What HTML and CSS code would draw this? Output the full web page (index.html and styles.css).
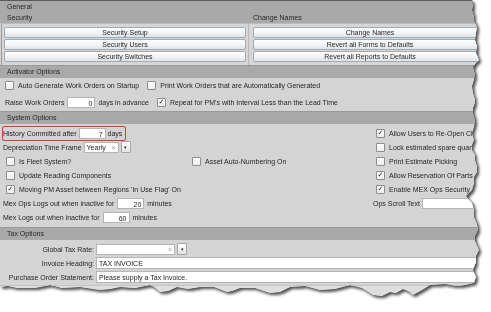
FILE: index.html
```html
<!DOCTYPE html>
<html lang="en">
<head>
    <meta charset="UTF-8">
    <title>Options</title>
    <link rel="stylesheet" href="styles.css">
</head>
<body>
    <div class="paper">
        <div class="sheet">
            <div class="bar">General</div>
            <div class="bar cols">
                <div class="col-head">Security</div>
                <div class="col-head">Change Names</div>
            </div>
            <div class="btn-panel">
                <div class="btn-col left">
                    <div class="btn">Security Setup</div>
                    <div class="btn">Security Users</div>
                    <div class="btn">Security Switches</div>
                </div>
                <div class="btn-col">
                    <div class="btn">Change Names</div>
                    <div class="btn">Revert all Forms to Defaults</div>
                    <div class="btn">Revert all Reports to Defaults</div>
                </div>
            </div>

            <div class="section-head">Activator Options</div>
            <div class="section activator">
                <div class="row">
                    <span class="check"><span class="box"></span>Auto Generate Work Orders on Startup</span>
                    <span class="check gap"><span class="box"></span>Print Work Orders that are Automatically Generated</span>
                </div>
                <div class="row">
                    <span>Raise Work Orders</span>
                    <span class="field num w-days">0</span>
                    <span>days in advance</span>
                    <span class="check gap"><span class="box on">&#10003;</span>Repeat for PM's with Interval Less than the Lead Time</span>
                </div>
            </div>

            <div class="section-head">System Options</div>
            <div class="section system">
                <div class="cell">
                    <span class="highlight">
                        <span>History Committed after</span>
                        <span class="field num w-hist">7</span>
                        <span>days</span>
                    </span>
                </div>
                <div class="cell"></div>
                <div class="cell clip"><span class="check"><span class="box on">&#10003;</span>Allow Users to Re-Open Clos</span></div>

                <div class="cell">
                    <span>Depreciation Time Frame</span>
                    <span class="combo w-year"><span>Yearly</span><span class="clear">&#215;</span></span>
                    <span class="drop">&#9662;</span>
                </div>
                <div class="cell"></div>
                <div class="cell clip"><span class="check"><span class="box"></span>Lock estimated spare quant</span></div>

                <div class="cell"><span class="check"><span class="box"></span>Is Fleet System?</span></div>
                <div class="cell"><span class="check"><span class="box"></span>Asset Auto-Numbering On</span></div>
                <div class="cell clip"><span class="check"><span class="box"></span>Print Estimate Picking</span></div>

                <div class="cell"><span class="check"><span class="box"></span>Update Reading Components</span></div>
                <div class="cell"></div>
                <div class="cell clip"><span class="check"><span class="box on">&#10003;</span>Allow Reservation Of Parts</span></div>

                <div class="cell wide"><span class="check"><span class="box on">&#10003;</span>Moving PM Asset between Regions 'In Use Flag' On</span></div>
                <div class="cell clip"><span class="check"><span class="box on">&#10003;</span>Enable MEX Ops Security</span></div>

                <div class="cell wide">
                    <span>Mex Ops Logs out when inactive for</span>
                    <span class="field num w-min">20</span>
                    <span>minutes</span>
                </div>
                <div class="cell clip">
                    <span>Ops Scroll Text</span>
                    <span class="field w-scroll"></span>
                </div>

                <div class="cell wide">
                    <span>Mex Logs out when inactive for</span>
                    <span class="field num w-min">60</span>
                    <span>minutes</span>
                </div>
            </div>

            <div class="section-head">Tax Options</div>
            <div class="section tax">
                <span class="tax-label">Global Tax Rate:</span>
                <span class="tax-value">
                    <span class="combo w-rate"><span></span><span class="clear">&#215;</span></span>
                    <span class="drop">&#9662;</span>
                </span>
                <span class="tax-label">Invoice Heading:</span>
                <span class="field full">TAX INVOICE</span>
                <span class="tax-label">Purchase Order Statement:</span>
                <span class="field full">Please supply a Tax Invoice.</span>
            </div>
            <div class="tail"></div>
        </div>
    </div>
</body>
</html>
```

FILE: styles.css
```css
body {
    margin: 0;
    padding: 0;
    background-color: #ffffff;
    font-family: "Liberation Sans", Arial, sans-serif;
    font-size: 7px;
    color: #262626;
}

/* torn paper effect round the screenshot */
.paper {
    width: 491px;
    height: 312px;
    overflow: hidden;
    filter: drop-shadow(0 0 0.7px #111111) drop-shadow(2px 2px 1.5px rgba(0, 0, 0, 0.7));
}

.sheet {
    width: 491px;
    background-color: #d4d4d4;
    border-top: 1px solid #5a5a5a;
    box-sizing: border-box;
    overflow: hidden;
    clip-path: polygon(0 0, 472px 0, 473px 6px, 472px 10px, 474px 16px, 474px 21px, 477px 27px, 476px 33px, 475px 40px, 477px 46px, 476px 53px, 479px 60px, 476px 63px, 473px 67px, 475px 74px, 474px 80px, 472px 86px, 473px 93px, 475px 99px, 475px 103px, 473px 108px, 473px 113px, 475px 120px, 474px 127px, 472px 133px, 474px 140px, 472px 145px, 472px 150px, 475px 155px, 475px 160px, 477px 166px, 477px 172px, 474px 177px, 474px 183px, 472px 190px, 466px 196px, 468px 199px, 472px 203px, 474px 210px, 474px 217px, 477px 224px, 478px 230px, 475px 236px, 475px 241px, 479px 250px, 476px 256px, 476px 262px, 473px 270px, 476px 277px, 474px 283px, 465px 285px, 457px 286px, 445px 284px, 430px 285px, 422px 290px, 413px 295px, 408px 291px, 403px 289px, 396px 293px, 390px 292px, 382px 296px, 373px 295px, 362px 288px, 350px 285px, 335px 289px, 320px 290px, 305px 286px, 290px 287px, 280px 292px, 270px 293px, 255px 288px, 240px 288px, 232px 291px, 227px 292px, 214px 287px, 200px 287px, 188px 289px, 177px 287px, 168px 291px, 160px 292px, 154px 287px, 150px 285px, 135px 288px, 120px 287px, 110px 289px, 100px 290px, 80px 287px, 62px 288px, 50px 285px, 35px 288px, 17px 288px, 8px 286px, 0 287px);
}

.bar {
    background-color: #a9a9a9;
    height: 11px;
    line-height: 11px;
    padding-left: 7px;
}

.cols {
    display: flex;
    padding-left: 0;
}

.col-head {
    flex: none;
    width: 246px;
    padding-left: 7px;
    box-sizing: border-box;
}

.btn-panel {
    display: flex;
    background-color: #d6d6d6;
    border-top: 1px solid #bcbcbc;
    border-left: 1px solid #9a9a9a;
    margin-left: 1px;
    height: 42px;
    box-sizing: border-box;
}

.btn-col {
    flex: none;
    display: flex;
    flex-direction: column;
    gap: 1px;
    padding: 3px 2px 0 4px;
    width: 240px;
    box-sizing: border-box;
}

.btn-col.left {
    width: 247px;
    border-right: 1px solid #b8b8b8;
    padding: 3px 2px 0 2px;
}

.btn {
    height: 11px;
    line-height: 10px;
    text-align: center;
    border: 1px solid #9fabb6;
    border-radius: 2px;
    background: linear-gradient(#ffffff, #f1f3f5 55%, #dfe3e7);
    box-sizing: border-box;
    white-space: nowrap;
}

.section-head {
    background-color: #a9a9a9;
    height: 12px;
    line-height: 12px;
    padding-left: 7px;
    border-top: 1px solid #9a9a9a;
}

.section {
    background-color: #d4d4d4;
}

.activator {
    display: flex;
    flex-direction: column;
    gap: 2px;
    padding: 0 0 0 5px;
    height: 33px;
    box-sizing: border-box;
}

.row {
    display: flex;
    align-items: center;
    gap: 2px;
    height: 15px;
    white-space: nowrap;
}

.check {
    display: inline-flex;
    align-items: center;
    gap: 4px;
    white-space: nowrap;
}

.check.gap {
    margin-left: 6px;
}

.box {
    width: 7px;
    height: 7px;
    background: linear-gradient(#ffffff, #ececec);
    border: 1px solid #8d8d8d;
    border-radius: 1px;
    font-size: 7px;
    line-height: 7px;
    text-align: center;
    color: #202020;
    font-family: "DejaVu Sans", sans-serif;
}

.field {
    display: inline-block;
    height: 11px;
    line-height: 11px;
    background-color: #ffffff;
    border: 1px solid #b5b5b5;
    box-sizing: border-box;
    padding: 0 2px;
    white-space: nowrap;
}

.num {
    text-align: right;
}

.w-days {
    width: 28px;
    margin: 0 1px;
}

.w-hist {
    width: 27px;
}

.w-min {
    width: 27px;
    margin: 0 1px;
}

.w-scroll {
    width: 120px;
}

.system {
    display: grid;
    grid-template-columns: 186px 184px 1fr;
    grid-template-rows: repeat(7, 14px);
    padding: 2px 0 3px 3px;
    height: 103px;
    box-sizing: border-box;
}

.cell {
    display: flex;
    align-items: center;
    gap: 2px;
    white-space: nowrap;
}

.cell.clip {
    overflow: hidden;
}

.system .cell > .check {
    margin-left: 3px;
}

.wide {
    grid-column: span 2;
}

.highlight {
    display: inline-flex;
    align-items: center;
    gap: 2px;
    border: 1.5px solid #d53a35;
    border-radius: 2px;
    padding: 1px 3px 1px 0;
    margin-left: -1px;
}

.combo {
    display: inline-flex;
    justify-content: space-between;
    align-items: center;
    height: 11px;
    background-color: #ffffff;
    border: 1px solid #b5b5b5;
    box-sizing: border-box;
    padding: 0 2px;
}

.w-year {
    width: 35px;
}

.w-rate {
    width: 79px;
}

.clear {
    color: #9a9a9a;
    font-size: 7px;
}

.drop {
    display: inline-block;
    width: 8px;
    height: 10px;
    line-height: 10px;
    text-align: center;
    font-size: 5px;
    border: 1px solid #a5a5a5;
    border-radius: 1px;
    background: linear-gradient(#ffffff, #e4e4e4);
}

.tax {
    display: grid;
    grid-template-columns: 94px 1fr;
    grid-auto-rows: 14px;
    column-gap: 2px;
    align-items: center;
    padding: 2px 0 0 0;
    height: 45px;
    box-sizing: border-box;
}

.tax-label {
    text-align: right;
    white-space: nowrap;
}

.tax-value {
    display: flex;
    align-items: center;
    gap: 2px;
}

.field.full {
    width: 100%;
    height: 12px;
}

.tail {
    height: 12px;
    background-color: #dedede;
    border-top: 1px solid #c4c4c4;
}
```
